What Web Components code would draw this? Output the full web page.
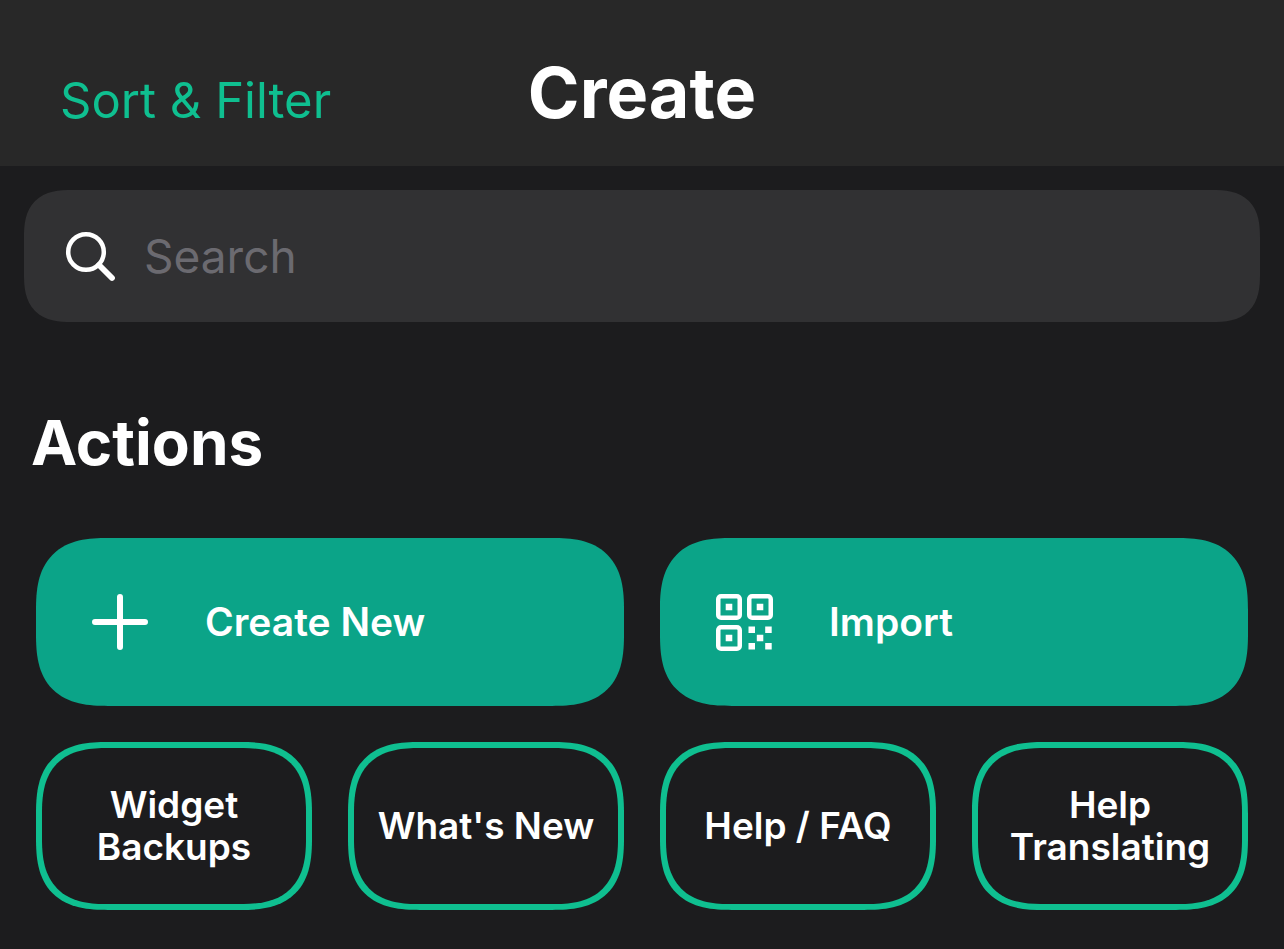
<!DOCTYPE html>
<html lang="en">
<head>
<meta charset="utf-8">
<meta name="viewport" content="width=device-width, initial-scale=1">
<title>Create</title>
<style>
  :root {
    --bg: #1c1c1e;
    --bar: #282828;
    --field: #313133;
    --muted: #6b6a70;
    --accent: #0fbf90;
    --fill: #0ba488;
  }
  body {
    margin: 0;
    min-height: 100vh;
    background: var(--bg);
    color: #fff;
    font-family: Inter, "Liberation Sans", sans-serif;
  }
</style>
</head>
<body>
<create-page></create-page>

<script>
const define = (name, html) => {
  const template = document.createElement("template");
  template.innerHTML = html;
  customElements.define(name, class extends HTMLElement {
    constructor() {
      super();
      this.attachShadow({ mode: "open" }).append(template.content.cloneNode(true));
    }
  });
};

define("nav-bar", `
  <style>
    :host { display: block; background: var(--bar); }
    header {
      display: grid;
      grid-template-columns: 1fr auto 1fr;
      align-items: baseline;
      padding: 51px 60px 31px;
    }
    h1 { margin: 0; font-size: 70px; line-height: 84px; font-weight: 700; }
    button {
      justify-self: start;
      padding: 0;
      border: 0;
      background: none;
      color: var(--accent);
      font: 400 49px/60px Inter, "Liberation Sans", sans-serif;
      white-space: nowrap;
      cursor: pointer;
    }
  </style>
  <header>
    <button type="button"><slot name="action"></slot></button>
    <h1><slot></slot></h1>
  </header>
`);

define("search-field", `
  <style>
    :host { display: block; }
    label {
      display: flex;
      align-items: center;
      gap: 28px;
      height: 132px;
      box-sizing: border-box;
      padding: 0 40px;
      border-radius: 40px;
      background: var(--field);
    }
    @supports (corner-shape: squircle) {
      label { border-radius: 48px; corner-shape: superellipse(1.4); }
    }
    svg { flex: none; width: 52px; height: 52px; }
    input {
      flex: 1;
      min-width: 0;
      padding: 0;
      border: 0;
      outline: 0;
      background: none;
      color: #fff;
      font: 400 46px/60px Inter, "Liberation Sans", sans-serif;
      height: 60px;
    }
    input::placeholder { color: var(--muted); opacity: 1; }
  </style>
  <label>
    <svg viewBox="0 0 52 52" fill="none" stroke="#fff" stroke-linecap="round" aria-hidden="true">
      <circle cx="22" cy="22" r="17.800" stroke-width="4.500"/>
      <path d="M35 35 48 48" stroke-width="5.800"/>
    </svg>
    <input type="search" placeholder="Search" aria-label="Search">
  </label>
`);

define("action-tile", `
  <style>
    :host { display: block; }
    button {
      display: flex;
      align-items: center;
      gap: 56px;
      width: 100%;
      height: 168px;
      padding: 0 56px;
      border: 0;
      border-radius: 58px;
      background: var(--fill);
      color: #fff;
      font: 600 39px/46px Inter, "Liberation Sans", sans-serif;
      cursor: pointer;
    }
    :host([outline]) button {
      justify-content: center;
      padding: 0 12px;
      border: 6px solid var(--accent);
      background: none;
      font-size: 37px;
      line-height: 42px;
    }
    @supports (corner-shape: squircle) {
      button { border-radius: 72px; corner-shape: superellipse(1.4); }
    }
    ::slotted(svg) { flex: none; width: 57px; height: 57px; }
  </style>
  <button type="button"><slot name="icon"></slot><span><slot></slot></span></button>
`);

define("action-section", `
  <style>
    :host { display: block; }
    h2 { margin: 0; padding: 0 7px; font-size: 62px; line-height: 78px; font-weight: 700; }
    div {
      display: grid;
      grid-template-columns: repeat(4, minmax(0, 1fr));
      gap: 36px;
      padding: 56px 12px 0;
    }
    ::slotted([wide]) { grid-column: span 2; }
  </style>
  <h2><slot name="title"></slot></h2>
  <div><slot></slot></div>
`);

define("create-page", `
  <style>
    :host { display: block; }
    main {
      display: flex;
      flex-direction: column;
      gap: 82px;
      padding: 24px 24px 36px;
    }
  </style>
  <nav-bar><span slot="action">Sort &amp; Filter</span>Create</nav-bar>
  <main>
    <search-field></search-field>
    <action-section>
      <span slot="title">Actions</span>
      <action-tile wide>
        <svg slot="icon" viewBox="0 0 57 57" stroke="#fff" stroke-width="6" stroke-linecap="round" aria-hidden="true">
          <path d="M28 3v50M3 28h50"/>
        </svg>
        Create New
      </action-tile>
      <action-tile wide>
        <svg slot="icon" viewBox="0 0 57 57" fill="#fff" aria-hidden="true">
          <g fill="none" stroke="#fff" stroke-width="4.500">
            <rect x="2.250" y="2.250" width="21.500" height="21.500" rx="2.800"/>
            <rect x="33.250" y="2.250" width="21.500" height="21.500" rx="2.800"/>
            <rect x="2.250" y="33.250" width="21.500" height="21.500" rx="2.800"/>
          </g>
          <path d="M9.700 9.700h6.600v6.600h-6.600zM40.700 9.700h6.600v6.600h-6.600zM9.700 40.700h6.600v6.600h-6.600zM32.500 32.500h6.500v6.500h-6.500zM49.200 32.500h6.500v6.500h-6.500zM40.800 40.800h6.500v6.500h-6.500zM32.500 49h6.500v6.500h-6.500zM49.200 49h6.500v6.500h-6.500z"/>
        </svg>
        Import
      </action-tile>
      <action-tile outline>Widget Backups</action-tile>
      <action-tile outline>What's New</action-tile>
      <action-tile outline>Help / FAQ</action-tile>
      <action-tile outline>Help Translating</action-tile>
    </action-section>
  </main>
`);
</script>
</body>
</html>
